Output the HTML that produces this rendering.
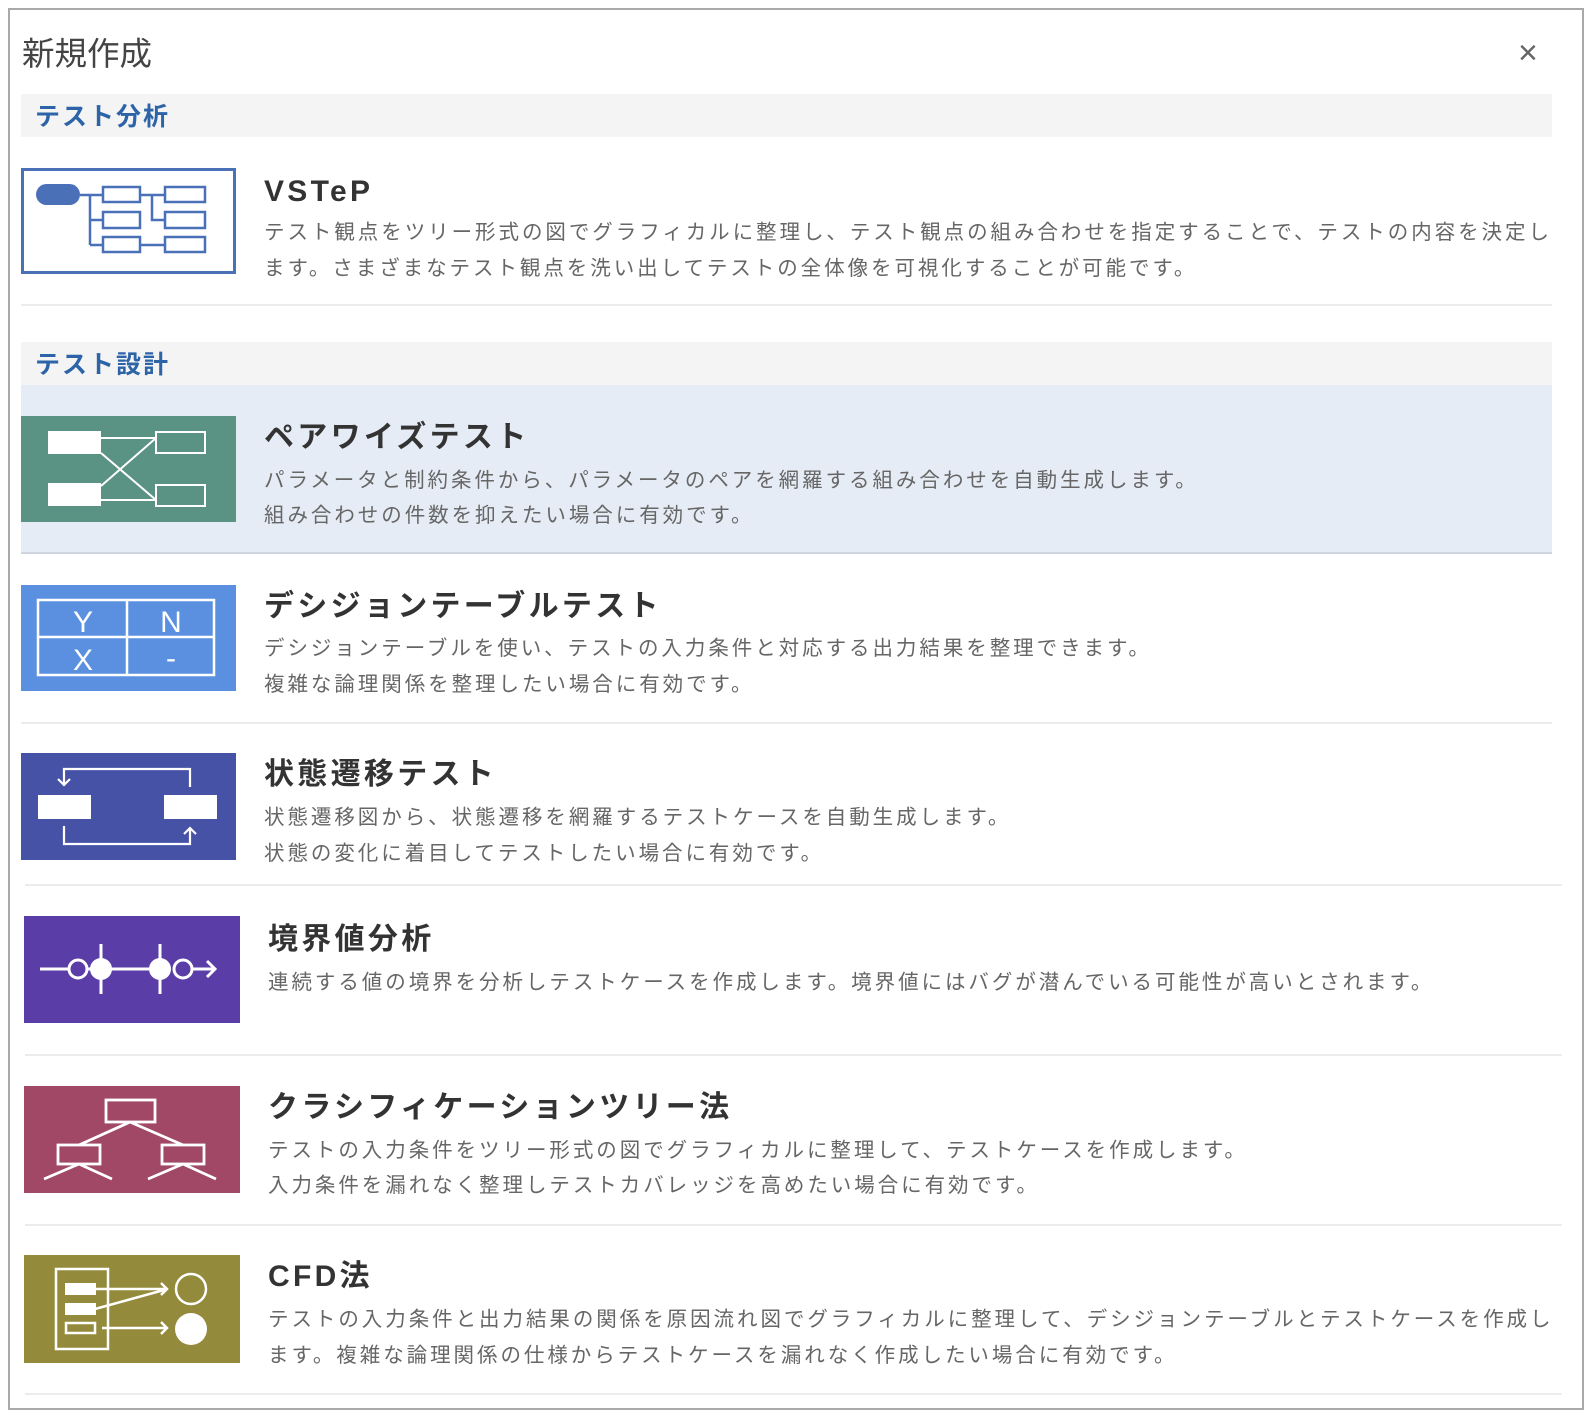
<!DOCTYPE html>
<html><head><meta charset="utf-8">
<style>
*{margin:0;padding:0;box-sizing:border-box}
body{width:1590px;height:1418px;background:#fff;position:relative;overflow:hidden;font-family:"Liberation Sans","Noto Sans CJK JP",sans-serif}
.frame{position:absolute;left:8px;top:8px;width:1576px;height:1402px;border:2px solid #a9a9a9}
.abs{position:absolute}
.h1{left:22px;top:34px;font-size:32.5px;color:#444;line-height:40px}
.close{left:1518px;top:36px;font-size:34px;color:#666;line-height:34px}
.sec{left:21px;width:1531px;height:43px;background:#f4f4f4}
.sec span{position:absolute;left:14px;top:7px;font-size:25px;font-weight:bold;color:#2d64a8;letter-spacing:2px;line-height:32px}
.t{font-size:30px;font-weight:bold;color:#333;letter-spacing:3.3px;line-height:36px;white-space:nowrap}
.d{font-size:20.5px;color:#666;letter-spacing:2.95px;line-height:26px;white-space:nowrap}
.sep{height:2px;background:#ececec}
svg{position:absolute}
</style></head><body>
<div class="frame"></div>
<div class="abs h1">新規作成</div>
<div class="abs close">×</div>

<div class="abs sec" style="top:94px"><span>テスト分析</span></div>

<svg style="left:21px;top:168px" width="215" height="106" viewBox="0 0 215 106">
<rect x="1.5" y="1.5" width="212" height="103" fill="#fff" stroke="#4a70b8" stroke-width="3"/>
<g fill="none" stroke="#4a70b8" stroke-width="2.5">
<path d="M59 27H69M69 27V77M69 27H82M69 52H82M69 77H82M119 27H144M131 27V52H144M119 77H144"/>
<rect x="82" y="19" width="37" height="15"/><rect x="82" y="44" width="37" height="16"/><rect x="82" y="69" width="37" height="15"/>
<rect x="144" y="19" width="40" height="15"/><rect x="144" y="44" width="40" height="16"/><rect x="144" y="69" width="40" height="15"/>
</g>
<rect x="15" y="16" width="44" height="21" rx="10.5" fill="#4a70b8"/>
</svg>
<div class="abs t" style="left:264px;top:174px">VSTeP</div>
<div class="abs d" style="left:264px;top:220px">テスト観点をツリー形式の図でグラフィカルに整理し、テスト観点の組み合わせを指定することで、テストの内容を決定し</div>
<div class="abs d" style="left:264px;top:256px">ます。さまざまなテスト観点を洗い出してテストの全体像を可視化することが可能です。</div>
<div class="abs sep" style="left:21px;top:304px;width:1531px"></div>

<div class="abs sec" style="top:342px"><span>テスト設計</span></div>

<div class="abs" style="left:21px;top:385px;width:1531px;height:169px;background:#e6ecf5;border-bottom:2px solid #cfd6df"></div>
<svg style="left:21px;top:416px" width="215" height="106" viewBox="0 0 215 106">
<rect width="215" height="106" fill="#5a9383"/>
<rect x="27" y="15" width="53" height="23" fill="#fff"/><rect x="27" y="67" width="53" height="23" fill="#fff"/>
<g fill="none" stroke="#fff" stroke-width="2">
<rect x="135" y="16" width="49" height="21"/><rect x="135" y="69" width="49" height="21"/>
<path d="M80 22H135M80 37L135 84M80 70L135 22M80 84H135"/>
</g></svg>
<div class="abs t" style="left:264px;top:420px">ペアワイズテスト</div>
<div class="abs d" style="left:264px;top:468px">パラメータと制約条件から、パラメータのペアを網羅する組み合わせを自動生成します。</div>
<div class="abs d" style="left:264px;top:503px">組み合わせの件数を抑えたい場合に有効です。</div>

<svg style="left:21px;top:585px" width="215" height="106" viewBox="0 0 215 106">
<rect width="215" height="106" fill="#5b90e0"/>
<g fill="none" stroke="#fff" stroke-width="2.5"><rect x="17" y="15" width="176" height="75"/><path d="M106 15V90M17 52H193"/></g>
<g fill="#fff" font-family="Liberation Sans,sans-serif" font-size="30" text-anchor="middle">
<text x="62" y="47">Y</text><text x="150" y="47">N</text><text x="62" y="85">X</text><text x="150" y="83">-</text></g>
</svg>
<div class="abs t" style="left:264px;top:589px">デシジョンテーブルテスト</div>
<div class="abs d" style="left:264px;top:636px">デシジョンテーブルを使い、テストの入力条件と対応する出力結果を整理できます。</div>
<div class="abs d" style="left:264px;top:672px">複雑な論理関係を整理したい場合に有効です。</div>
<div class="abs sep" style="left:21px;top:722px;width:1531px"></div>

<svg style="left:21px;top:753px" width="215" height="107" viewBox="0 0 215 107">
<rect width="215" height="107" fill="#4652a6"/>
<rect x="17" y="42" width="53" height="24" fill="#fff"/><rect x="143" y="42" width="53" height="24" fill="#fff"/>
<g fill="none" stroke="#fff" stroke-width="2.2">
<path d="M169 34V16H43V32M37 26L43 32L49 26"/>
<path d="M43 73V91H169V75M163 81L169 75L175 81"/>
</g></svg>
<div class="abs t" style="left:264px;top:757px">状態遷移テスト</div>
<div class="abs d" style="left:264px;top:805px">状態遷移図から、状態遷移を網羅するテストケースを自動生成します。</div>
<div class="abs d" style="left:264px;top:841px">状態の変化に着目してテストしたい場合に有効です。</div>
<div class="abs sep" style="left:25px;top:884px;width:1537px"></div>

<svg style="left:24px;top:916px" width="216" height="107" viewBox="0 0 216 107">
<rect width="216" height="107" fill="#5b3da8"/>
<g fill="none" stroke="#fff" stroke-width="3">
<path d="M16 53H45M63 53H125M168 53H190M183 45L191 53L183 61M77 28V78M136 28V78"/>
<circle cx="54" cy="53" r="9"/><circle cx="159" cy="53" r="9"/>
</g>
<circle cx="77" cy="53" r="11" fill="#fff"/><circle cx="136" cy="53" r="11" fill="#fff"/>
</svg>
<div class="abs t" style="left:268px;top:922px">境界値分析</div>
<div class="abs d" style="left:268px;top:970px">連続する値の境界を分析しテストケースを作成します。境界値にはバグが潜んでいる可能性が高いとされます。</div>
<div class="abs sep" style="left:25px;top:1054px;width:1537px"></div>

<svg style="left:24px;top:1086px" width="216" height="107" viewBox="0 0 216 107">
<rect width="216" height="107" fill="#a04866"/>
<g fill="none" stroke="#fff" stroke-width="2.8">
<rect x="82" y="14" width="49" height="22"/>
<rect x="34" y="59" width="42" height="19"/><rect x="138" y="59" width="42" height="19"/>
<path d="M106 36L55 59M106 36L159 59M55 78L20 93M55 78L88 93M159 78L124 93M159 78L192 93"/>
</g></svg>
<div class="abs t" style="left:268px;top:1090px">クラシフィケーションツリー法</div>
<div class="abs d" style="left:268px;top:1138px">テストの入力条件をツリー形式の図でグラフィカルに整理して、テストケースを作成します。</div>
<div class="abs d" style="left:268px;top:1173px">入力条件を漏れなく整理しテストカバレッジを高めたい場合に有効です。</div>
<div class="abs sep" style="left:25px;top:1224px;width:1537px"></div>

<svg style="left:24px;top:1255px" width="216" height="108" viewBox="0 0 216 108">
<rect width="216" height="108" fill="#938a3c"/>
<g fill="none" stroke="#fff" stroke-width="2.5">
<rect x="32" y="14" width="52" height="80"/>
<rect x="42" y="68" width="29" height="10"/>
<path d="M71 34H143M137 28L143 34L137 40M71 54L140 35M78 73H143M137 67L143 73L137 79"/>
<circle cx="167" cy="34" r="15"/>
</g>
<rect x="41" y="28" width="31" height="12" fill="#fff"/><rect x="41" y="48" width="31" height="12" fill="#fff"/>
<circle cx="167" cy="74" r="16" fill="#fff"/>
</svg>
<div class="abs t" style="left:268px;top:1259px">CFD法</div>
<div class="abs d" style="left:268px;top:1307px">テストの入力条件と出力結果の関係を原因流れ図でグラフィカルに整理して、デシジョンテーブルとテストケースを作成し</div>
<div class="abs d" style="left:268px;top:1343px">ます。複雑な論理関係の仕様からテストケースを漏れなく作成したい場合に有効です。</div>
<div class="abs sep" style="left:25px;top:1393px;width:1537px"></div>
</body></html>
